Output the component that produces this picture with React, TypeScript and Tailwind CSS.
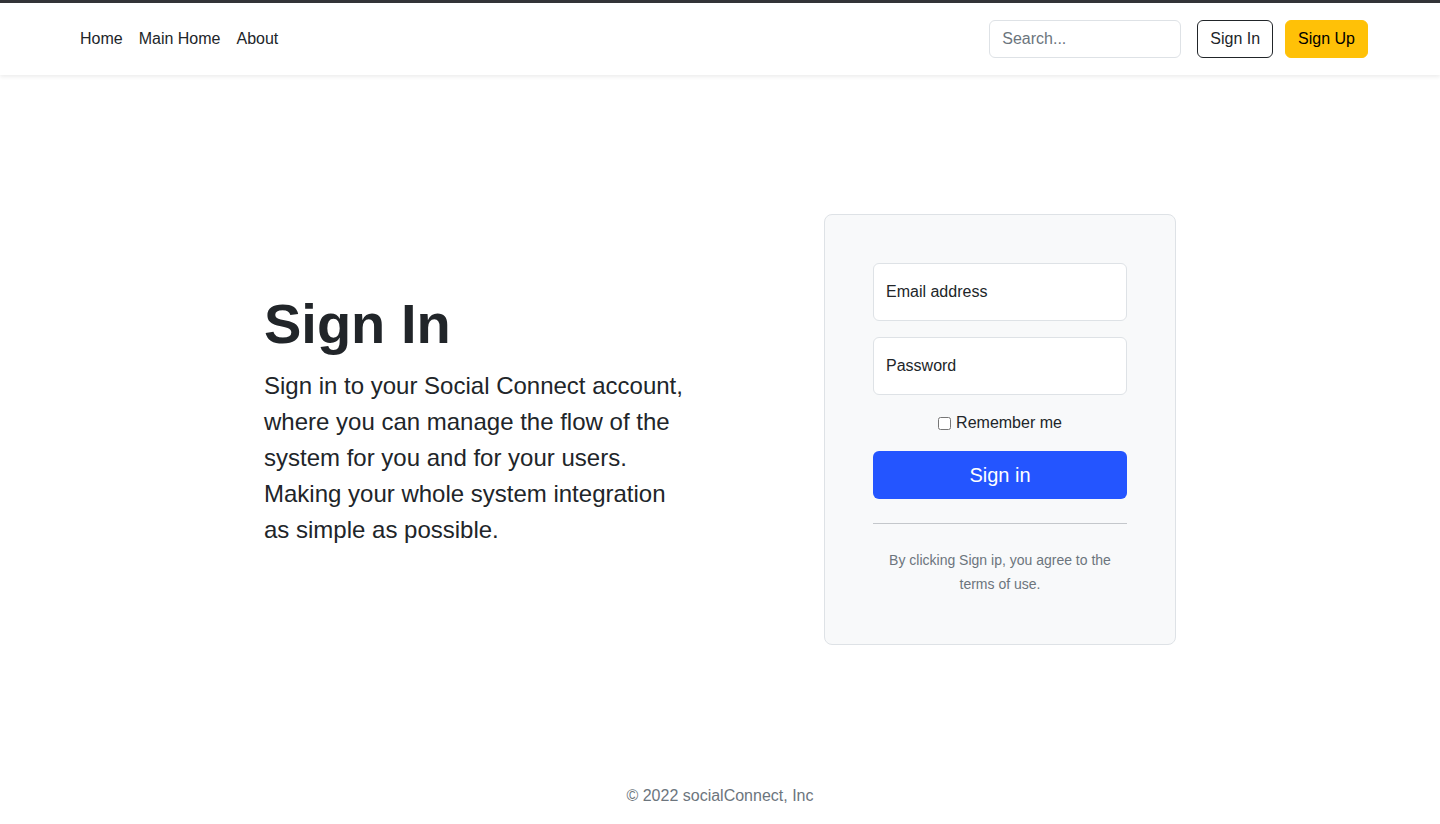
import React from "react";

export default function App() {
  const font = { fontFamily: '"Liberation Sans", Arial, sans-serif' };
  return (
    <div style={font} className="min-h-screen bg-white text-[#212529] text-base leading-6">
      <header className="border-t-[3px] border-[#333438] bg-white shadow-[0_2px_4px_rgba(0,0,0,0.075)]">
        <div className="h-[72px] px-[72px] flex items-center justify-between">
          <nav className="flex items-center">
            <a className="px-2 text-[#212529]">Home</a>
            <a className="px-2 text-[#212529]">Main Home</a>
            <a className="px-2 text-[#212529]">About</a>
          </nav>
          <div className="flex items-center">
            <input
              type="search"
              placeholder="Search..."
              className="w-[192px] h-[38px] px-3 border border-[#dee2e6] rounded-md text-base placeholder:text-[#6c757d] outline-none mr-4"
            />
            <button className="h-[38px] px-3 border border-[#212529] rounded-md text-[#212529] mr-3 bg-white">Sign In</button>
            <button className="h-[38px] px-3 border border-[#ffc107] rounded-md text-black bg-[#ffc107]">Sign Up</button>
          </div>
        </div>
      </header>

      <main className="pt-[43px]">
        <div className="w-[960px] mx-auto px-6 py-12">
          <div className="flex items-center py-12">
            <div className="w-[512px] mr-[48px]">
              <h1 className="text-[56px] font-bold leading-none mb-4 text-[#212529]">Sign In</h1>
              <p className="w-[426px] text-2xl leading-9 mb-4 text-[#212529]">
                Sign in to your Social Connect account, where you can manage the flow of the system for you and for your users. Making your whole system integration as simple as possible.
              </p>
            </div>
            <form className="w-[352px] p-12 border border-[#dee2e6] rounded-lg bg-[#f8f9fa]">
              <input
                type="email"
                placeholder="Email address"
                className="block w-full h-[58px] px-3 mb-4 bg-white border border-[#dee2e6] rounded-md text-base placeholder:text-[#212529] outline-none"
              />
              <input
                type="password"
                placeholder="Password"
                className="block w-full h-[58px] px-3 mb-4 bg-white border border-[#dee2e6] rounded-md text-base placeholder:text-[#212529] outline-none"
              />
              <div className="h-6 mb-4 flex items-center justify-center">
                <label className="flex items-center text-[#212529]">
                  <input type="checkbox" className="w-[13px] h-[13px] mr-[5px]" />
                  Remember me
                </label>
              </div>
              <button type="button" className="w-full h-12 rounded-md bg-[#2455ff] text-white text-xl">Sign in</button>
              <hr className="my-6 border-0 border-t border-[#c4c7cb]" />
              <div className="text-center leading-6">
                <small className="text-sm text-[#6c757d]">By clicking Sign ip, you agree to the terms of use.</small>
              </div>
            </form>
          </div>
        </div>
      </main>

      <footer className="mt-[27px] mb-6 py-4">
        <p className="text-center text-[#6c757d]">© 2022 socialConnect, Inc</p>
      </footer>
    </div>
  );
}
